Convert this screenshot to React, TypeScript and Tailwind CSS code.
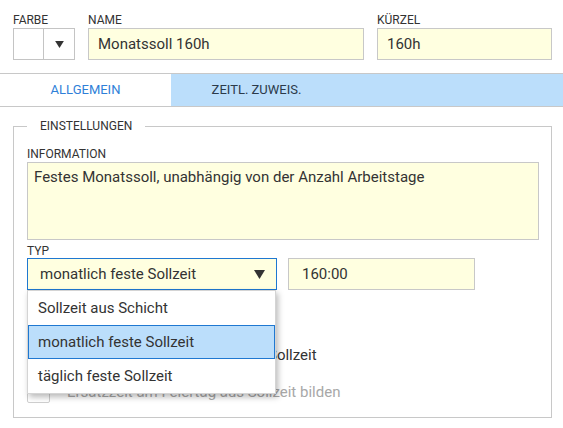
const Caret = ({ w = 10, h = 8 }: { w?: number; h?: number }) => (
  <svg width={w} height={h} viewBox="0 0 10 8">
    <path d="M0 0h10L5 8z" fill="#333" />
  </svg>
);

const options = ['Sollzeit aus Schicht', 'monatlich feste Sollzeit', 'täglich feste Sollzeit'];

export default function App() {
  return (
    <div className="w-[563px] h-[428px] overflow-hidden bg-white font-['Roboto',sans-serif] text-[#333]">
      {/* kopfzeile */}
      <div className="flex pt-[13px] pl-[13px]">
        <div className="w-[62px]">
          <div className="h-[15px] text-[12px] leading-[15px]">FARBE</div>
          <div className="flex h-[32px] border border-[#c4c4c4]">
            <div className="w-[30px] border-r border-[#c4c4c4]" />
            <div className="flex flex-1 items-center justify-center">
              <Caret w={9} h={7} />
            </div>
          </div>
        </div>
        <div className="ml-[13px] w-[276px]">
          <div className="h-[15px] text-[12px] leading-[15px]">NAME</div>
          <div className="flex h-[32px] items-center border border-[#c8c8c8] bg-[#ffffe0] pl-[9px] text-[15px]">
            Monatssoll 160h
          </div>
        </div>
        <div className="ml-[13px] w-[175px]">
          <div className="h-[15px] text-[12px] leading-[15px]">KÜRZEL</div>
          <div className="flex h-[32px] items-center border border-[#c8c8c8] bg-[#ffffe0] pl-[9px] text-[15px]">
            160h
          </div>
        </div>
      </div>

      {/* tabs */}
      <div className="mt-[13px] flex h-[34px] border-y border-[#c8c8c8] text-[13px]">
        <div className="flex w-[171px] items-center justify-center bg-white text-[#2f7fd8]">ALLGEMEIN</div>
        <div className="flex flex-1 bg-[#bbdefb]">
          <div className="flex w-[171px] items-center justify-center text-[#2b3a4a]">ZEITL. ZUWEIS.</div>
        </div>
      </div>

      <fieldset className="ml-[13px] mt-[12px] w-[539px] border border-[#c8c8c8] pb-[14px] pl-[13px] pr-[12px]">
        <legend className="px-[13px] text-[12px] leading-[14px]">EINSTELLUNGEN</legend>

        <div className="mt-[14px] h-[15px] text-[12px] leading-[15px]">INFORMATION</div>
        <div className="h-[78px] border border-[#c8c8c8] bg-[#ffffe0] pl-[6px] pt-[5px] text-[15px] leading-[18px]">
          Festes Monatssoll, unabhängig von der Anzahl Arbeitstage
        </div>

        <div className="mt-[4px] h-[14px] text-[12px] leading-[15px]">TYP</div>
        <div className="flex gap-[11px]">
          <div className="relative w-[250px]">
            <div className="flex h-[32px] items-center justify-between border border-[#1f78d1] bg-[#ffffe0] pl-[12px] pr-[11px] text-[15px]">
              <span>monatlich feste Sollzeit</span>
              <Caret w={11} h={9} />
            </div>
            <div className="absolute left-0 top-full z-10 w-[249px] border border-[#d4d4d4] bg-white text-[15px] shadow-[2px_3px_6px_rgba(0,0,0,0.28)]">
              {options.map((o, i) => (
                <div
                  key={o}
                  className={
                    i === 1
                      ? 'flex h-[34px] items-center border border-[#1f78d1] bg-[#bbdefb] pl-[9px]'
                      : 'flex h-[34px] items-center border border-transparent pl-[9px]'
                  }
                >
                  {o}
                </div>
              ))}
            </div>
          </div>
          <div className="flex h-[32px] w-[187px] items-center border border-[#c8c8c8] bg-[#ffffe0] pl-[13px] text-[15px]">
            160:00
          </div>
        </div>

        <div className="mt-[54px] flex h-[22px] items-center gap-[17px] text-[15px]">
          <div className="h-[22px] w-[23px] rounded-[2px] border border-[#bdbdbd] bg-white" />
          <span>Feiertage reduzieren die feste Sollzeit</span>
        </div>
        <div className="mt-[15px] flex h-[22px] items-center gap-[17px] text-[15px] text-[#a8a8a8]">
          <div className="h-[22px] w-[23px] rounded-[2px] border border-[#cfcfcf] bg-white" />
          <span>Ersatzzeit am Feiertag aus Sollzeit bilden</span>
        </div>
      </fieldset>
    </div>
  );
}
